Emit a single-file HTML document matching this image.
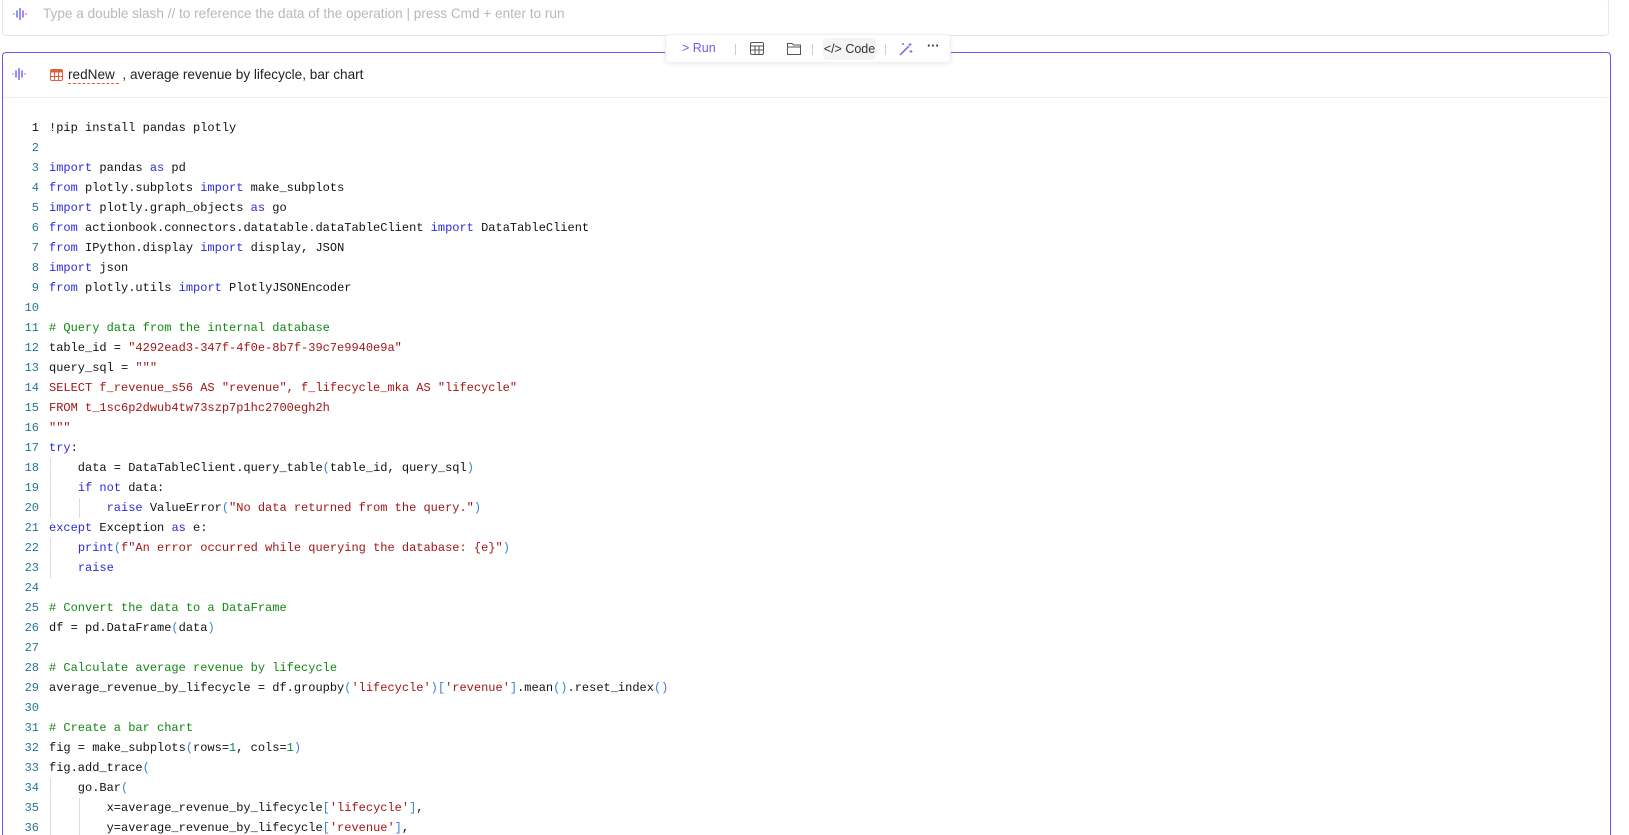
<!DOCTYPE html>
<html style="overflow:hidden;height:835px"><head><meta charset="utf-8"><style>
body{margin:0;width:1629px;height:835px;background:#fff;position:relative;overflow:hidden;font-family:"Liberation Sans",sans-serif}
.top{position:absolute;left:2px;top:-2px;width:1607px;height:38px;border:1px solid #e6e6e6;border-radius:4px;box-sizing:border-box}
.ph{position:absolute;left:40px;top:7px;font-size:13.6px;color:#b8b8b8}
.cell{position:absolute;left:2px;top:52px;width:1609px;height:790px;border:1.5px solid #7a4ef5;border-radius:4px;box-sizing:border-box}
.hdr{position:absolute;left:0;top:0;right:0;height:44px;border-bottom:1px solid #ececec}
.wave{position:absolute;width:14px;height:12px}
.ttl{position:absolute;left:65px;top:14px;font-size:13.6px;color:#222}
.ttl .nm{border-bottom:1px dashed #e05a3a;padding-bottom:1px}
.tb{position:absolute;left:665px;top:34px;width:286px;height:29px;background:#fff;border:1px solid #eee;border-radius:5px;box-shadow:0 1px 4px rgba(0,0,0,.08);font-size:12.5px;box-sizing:border-box}
.tb span{position:absolute;top:6px}
.sep{width:1px;height:11px;background:#ccc;top:9px!important}
.code{position:absolute;left:0;top:118px;font-family:"Liberation Mono",monospace;font-size:12px;color:#111}
.l{position:absolute;height:20px;line-height:20px;white-space:pre;left:49px}
.n{position:absolute;width:39px;left:0;text-align:right;line-height:20px;color:#237893}
.k{color:#2b2bdf}.c{color:#118811}.s{color:#a31515}.d{color:#098658}.p{color:#3a7fd8}
.g{position:absolute;width:1px;background:#ddd}
</style></head><body>
<div class="top">
<svg class="wave" style="left:10px;top:9px" viewBox="0 0 14 12"><g stroke-linecap="round" stroke-width="1.4"><line x1="1" y1="6" x2="1" y2="6" stroke="#4a7af0"/><line x1="4" y1="3" x2="4" y2="9" stroke="#5a6ff0"/><line x1="7" y1="0.5" x2="7" y2="11.5" stroke="#6a5ff0"/><line x1="10" y1="3" x2="10" y2="9" stroke="#7a55f0"/><line x1="13" y1="6" x2="13" y2="6" stroke="#8a4ff0"/></g></svg>
<div class="ph">Type a double slash // to reference the data of the operation | press Cmd + enter to run</div>
</div>
<div class="cell">
<div class="hdr">
<svg class="wave" style="left:9px;top:15px" viewBox="0 0 14 12"><g stroke-linecap="round" stroke-width="1.4"><line x1="1" y1="6" x2="1" y2="6" stroke="#4a7af0"/><line x1="4" y1="3" x2="4" y2="9" stroke="#5a6ff0"/><line x1="7" y1="0.5" x2="7" y2="11.5" stroke="#6a5ff0"/><line x1="10" y1="3" x2="10" y2="9" stroke="#7a55f0"/><line x1="13" y1="6" x2="13" y2="6" stroke="#8a4ff0"/></g></svg>
<svg style="position:absolute;left:47px;top:16px" width="13" height="12" viewBox="0 0 13 12"><rect x="0.5" y="0.5" width="12" height="11" rx="1.5" fill="none" stroke="#e0603a"/><rect x="0.5" y="0.5" width="12" height="3" fill="#e0603a"/><path d="M0.5 7.5H12.5M4.5 3.5V11.5M8.5 3.5V11.5" stroke="#e0603a"/></svg>
<div class="ttl"><span class="nm">redNew&nbsp;</span> , average revenue by lifecycle, bar chart</div>
</div>
</div>
<div class="tb">
<span style="left:16px;color:#7a55f0">&gt; Run</span>
<span class="sep" style="left:69px"></span>
<svg style="position:absolute;left:84px;top:7px" width="14" height="13" viewBox="0 0 14 13"><rect x="0.5" y="0.5" width="13" height="12" rx="1.5" fill="none" stroke="#555"/><path d="M0.5 4H13.5M0.5 8H13.5M5 4V12.5M9 4V12.5" stroke="#555"/></svg>
<svg style="position:absolute;left:121px;top:7px" width="14" height="13" viewBox="0 0 14 13"><path d="M0.5 1.5H5L6.5 3H13.5V12.5H0.5Z M0.5 5H13.5" fill="none" stroke="#555"/></svg>
<span class="sep" style="left:146px"></span>
<span style="left:157px;width:53px;height:22px;top:3px!important;background:#f4f4f4;border-radius:4px;line-height:22px;text-align:center;color:#333">&lt;/&gt; Code</span>
<span class="sep" style="left:219px"></span>
<svg style="position:absolute;left:233px;top:7px" width="14" height="14" viewBox="0 0 14 14"><path d="M1 13L10 4" stroke="#6a5ff0" stroke-width="1.5"/><path d="M11 1v3M9.5 2.5h3M4 1v2M3 2h2M12 8v3M10.5 9.5h3" stroke="#7a70f0"/></svg>
<span style="left:261px;top:4px;font-weight:bold;color:#333">···</span>
</div>
<div class="code">
<div class="g" style="left:50px;top:340px;height:60px"></div>
<div class="g" style="left:79px;top:380px;height:20px"></div>
<div class="g" style="left:50px;top:420px;height:40px"></div>
<div class="g" style="left:50px;top:660px;height:57px"></div>
<div class="g" style="left:79px;top:680px;height:37px"></div>
<div style="position:absolute;top:0px"><div class="n" style="color:#111">1</div><div class="l">!pip install pandas plotly</div></div>
<div style="position:absolute;top:20px"><div class="n">2</div></div>
<div style="position:absolute;top:40px"><div class="n">3</div><div class="l"><span class="k">import</span> pandas <span class="k">as</span> pd</div></div>
<div style="position:absolute;top:60px"><div class="n">4</div><div class="l"><span class="k">from</span> plotly.subplots <span class="k">import</span> make_subplots</div></div>
<div style="position:absolute;top:80px"><div class="n">5</div><div class="l"><span class="k">import</span> plotly.graph_objects <span class="k">as</span> go</div></div>
<div style="position:absolute;top:100px"><div class="n">6</div><div class="l"><span class="k">from</span> actionbook.connectors.datatable.dataTableClient <span class="k">import</span> DataTableClient</div></div>
<div style="position:absolute;top:120px"><div class="n">7</div><div class="l"><span class="k">from</span> IPython.display <span class="k">import</span> display, JSON</div></div>
<div style="position:absolute;top:140px"><div class="n">8</div><div class="l"><span class="k">import</span> json</div></div>
<div style="position:absolute;top:160px"><div class="n">9</div><div class="l"><span class="k">from</span> plotly.utils <span class="k">import</span> PlotlyJSONEncoder</div></div>
<div style="position:absolute;top:180px"><div class="n">10</div></div>
<div style="position:absolute;top:200px"><div class="n">11</div><div class="l c"># Query data from the internal database</div></div>
<div style="position:absolute;top:220px"><div class="n">12</div><div class="l">table_id = <span class="s">"4292ead3-347f-4f0e-8b7f-39c7e9940e9a"</span></div></div>
<div style="position:absolute;top:240px"><div class="n">13</div><div class="l">query_sql = <span class="s">"""</span></div></div>
<div style="position:absolute;top:260px"><div class="n">14</div><div class="l s">SELECT f_revenue_s56 AS "revenue", f_lifecycle_mka AS "lifecycle"</div></div>
<div style="position:absolute;top:280px"><div class="n">15</div><div class="l s">FROM t_1sc6p2dwub4tw73szp7p1hc2700egh2h</div></div>
<div style="position:absolute;top:300px"><div class="n">16</div><div class="l s">"""</div></div>
<div style="position:absolute;top:320px"><div class="n">17</div><div class="l"><span class="k">try</span>:</div></div>
<div style="position:absolute;top:340px"><div class="n">18</div><div class="l">    data = DataTableClient.query_table<span class="p">(</span>table_id, query_sql<span class="p">)</span></div></div>
<div style="position:absolute;top:360px"><div class="n">19</div><div class="l">    <span class="k">if not</span> data:</div></div>
<div style="position:absolute;top:380px"><div class="n">20</div><div class="l">        <span class="k">raise</span> ValueError<span class="p">(</span><span class="s">"No data returned from the query."</span><span class="p">)</span></div></div>
<div style="position:absolute;top:400px"><div class="n">21</div><div class="l"><span class="k">except</span> Exception <span class="k">as</span> e:</div></div>
<div style="position:absolute;top:420px"><div class="n">22</div><div class="l">    <span class="k">print</span><span class="p">(</span><span class="s">f"An error occurred while querying the database: {e}"</span><span class="p">)</span></div></div>
<div style="position:absolute;top:440px"><div class="n">23</div><div class="l">    <span class="k">raise</span></div></div>
<div style="position:absolute;top:460px"><div class="n">24</div></div>
<div style="position:absolute;top:480px"><div class="n">25</div><div class="l c"># Convert the data to a DataFrame</div></div>
<div style="position:absolute;top:500px"><div class="n">26</div><div class="l">df = pd.DataFrame<span class="p">(</span>data<span class="p">)</span></div></div>
<div style="position:absolute;top:520px"><div class="n">27</div></div>
<div style="position:absolute;top:540px"><div class="n">28</div><div class="l c"># Calculate average revenue by lifecycle</div></div>
<div style="position:absolute;top:560px"><div class="n">29</div><div class="l">average_revenue_by_lifecycle = df.groupby<span class="p">(</span><span class="s">'lifecycle'</span><span class="p">)</span><span class="p">[</span><span class="s">'revenue'</span><span class="p">]</span>.mean<span class="p">()</span>.reset_index<span class="p">()</span></div></div>
<div style="position:absolute;top:580px"><div class="n">30</div></div>
<div style="position:absolute;top:600px"><div class="n">31</div><div class="l c"># Create a bar chart</div></div>
<div style="position:absolute;top:620px"><div class="n">32</div><div class="l">fig = make_subplots<span class="p">(</span>rows=<span class="d">1</span>, cols=<span class="d">1</span><span class="p">)</span></div></div>
<div style="position:absolute;top:640px"><div class="n">33</div><div class="l">fig.add_trace<span class="p">(</span></div></div>
<div style="position:absolute;top:660px"><div class="n">34</div><div class="l">    go.Bar<span class="p">(</span></div></div>
<div style="position:absolute;top:680px"><div class="n">35</div><div class="l">        x=average_revenue_by_lifecycle<span class="p">[</span><span class="s">'lifecycle'</span><span class="p">]</span>,</div></div>
<div style="position:absolute;top:700px"><div class="n">36</div><div class="l">        y=average_revenue_by_lifecycle<span class="p">[</span><span class="s">'revenue'</span><span class="p">]</span>,</div></div>
</div>
</body></html>
